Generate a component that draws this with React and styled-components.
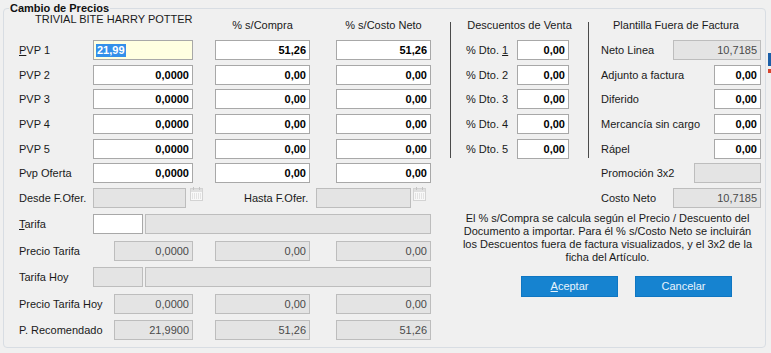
import styled, { createGlobalStyle } from 'styled-components';

const GlobalStyle = createGlobalStyle`
  html, body {
    margin: 0;
    padding: 0;
    background: #f0f0f0;
  }
  body {
    font-family: "Liberation Sans", Arial, sans-serif;
    font-size: 11px;
    color: #1a1a1a;
    overflow: hidden;
  }
`;

const tones = {
  white: { bg: '#ffffff', border: '#a8a8a8', color: '#000', weight: 'bold' },
  gray: { bg: '#e4e4e4', border: '#bdbdbd', color: '#4a4a4a', weight: 'normal' },
  yellow: { bg: '#ffffe1', border: '#a8a8a8', color: '#000', weight: 'bold' },
};

const pvpRows = [
  { label: 'PVP 2', pvp: '0,0000', compra: '0,00', neto: '0,00' },
  { label: 'PVP 3', pvp: '0,0000', compra: '0,00', neto: '0,00' },
  { label: 'PVP 4', pvp: '0,0000', compra: '0,00', neto: '0,00' },
  { label: 'PVP 5', pvp: '0,0000', compra: '0,00', neto: '0,00' },
  { label: 'Pvp Oferta', pvp: '0,0000', compra: '0,00', neto: '0,00' },
];

const plantilla = [
  { label: 'Adjunto a factura', value: '0,00' },
  { label: 'Diferido', value: '0,00' },
  { label: 'Mercancía sin cargo', value: '0,00' },
  { label: 'Rápel', value: '0,00' },
];

function CalendarIcon({ ml }) {
  return (
    <CalIcon $ml={ml} width="13" height="14" viewBox="0 0 13 14">
      <rect x="0.5" y="1.5" width="12" height="12" fill="#f8f8f8" stroke="#d3d3d3" />
      <rect x="1" y="2" width="11" height="3" fill="#e0e0e0" />
      <line x1="3.5" y1="0" x2="3.5" y2="3" stroke="#c4c4c4" />
      <line x1="9.5" y1="0" x2="9.5" y2="3" stroke="#c4c4c4" />
      {[6.5, 8.5, 10.5].map((y) =>
        [2.5, 4.5, 6.5, 8.5, 10.5].map((x) => (
          <rect key={`${x}-${y}`} x={x - 0.5} y={y} width="1" height="1" fill="#cdcdcd" />
        ))
      )}
    </CalIcon>
  );
}

export default function App() {
  return (
    <>
      <GlobalStyle />
      <GroupBox>
        <Legend>Cambio de Precios</Legend>

        <LeftPanel>
          <Row $h={31}>
            <Title>TRIVIAL BITE HARRY POTTER</Title>
            <ColHead>% s/Compra</ColHead>
            <ColHead>% s/Costo Neto</ColHead>
          </Row>

          <Row $h={24.67}>
            <Label>
              <u>P</u>VP 1
            </Label>
            <Field $tone="yellow" $w={100}>
              <Selected>21,99</Selected>
            </Field>
            <Field $tone="white" $w={95}>51,26</Field>
            <Field $tone="white" $w={95}>51,26</Field>
          </Row>
          {pvpRows.map((r) => (
            <Row key={r.label} $h={24.67}>
              <Label>{r.label}</Label>
              <Field $tone="white" $w={100}>{r.pvp}</Field>
              <Field $tone="white" $w={95}>{r.compra}</Field>
              <Field $tone="white" $w={95}>{r.neto}</Field>
            </Row>
          ))}

          <Row $h={26.4}>
            <Label>Desde F.Ofer.</Label>
            <Span3>
              <Field $tone="gray" $w={93} />
              <CalendarIcon ml={2} />
              <HastaLabel>Hasta F.Ofer.</HastaLabel>
              <Field $tone="gray" $w={95} />
              <CalendarIcon ml={0} />
            </Span3>
          </Row>
          <Row $h={26.4}>
            <Label>
              <u>T</u>arifa
            </Label>
            <Span3>
              <Field $tone="white" $w={50} />
              <Field $tone="gray" $grow />
            </Span3>
          </Row>
          <Row $h={26.4}>
            <Label>Precio Tarifa</Label>
            <Field $tone="gray" $w={79}>0,0000</Field>
            <Field $tone="gray" $w={95}>0,00</Field>
            <Field $tone="gray" $w={95}>0,00</Field>
          </Row>
          <Row $h={26.4}>
            <Label>Tarifa Hoy</Label>
            <Span3>
              <Field $tone="gray" $w={50} />
              <Field $tone="gray" $grow />
            </Span3>
          </Row>
          <Row $h={26.4}>
            <Label>Precio Tarifa Hoy</Label>
            <Field $tone="gray" $w={79}>0,0000</Field>
            <Field $tone="gray" $w={95}>0,00</Field>
            <Field $tone="gray" $w={95}>0,00</Field>
          </Row>
          <Row $h={26.4}>
            <Label>P. Recomendado</Label>
            <Field $tone="gray" $w={79}>21,9900</Field>
            <Field $tone="gray" $w={95}>51,26</Field>
            <Field $tone="gray" $w={95}>51,26</Field>
          </Row>
        </LeftPanel>

        <RightArea>
          <TopSection>
            <Separator />
            <DescCol>
              <ColTitle $align="center">Descuentos de Venta</ColTitle>
              {[1, 2, 3, 4, 5].map((n) => (
                <DescRow key={n}>
                  <DescLabel>
                    % Dto. {n === 1 ? <u>1</u> : n}
                  </DescLabel>
                  <Field $tone="white" $w={52}>0,00</Field>
                </DescRow>
              ))}
            </DescCol>
            <Separator />
            <PlantCol>
              <ColTitle $align="left">Plantilla Fuera de Factura</ColTitle>
              <PlantRow>
                <Label>Neto Linea</Label>
                <Field $tone="gray" $w={88}>10,7185</Field>
              </PlantRow>
              {plantilla.map((p) => (
                <PlantRow key={p.label}>
                  <Label>{p.label}</Label>
                  <Field $tone="white" $w={47}>{p.value}</Field>
                </PlantRow>
              ))}
              <PlantRow>
                <Label>Promoción 3x2</Label>
                <Field $tone="gray" $w={67} />
              </PlantRow>
              <PlantRow>
                <Label>Costo Neto</Label>
                <Field $tone="gray" $w={88}>10,7185</Field>
              </PlantRow>
            </PlantCol>
          </TopSection>

          <Note>
            El % s/Compra se calcula según el Precio / Descuento del
            <br />
            Documento a importar. Para él % s/Costo Neto se incluirán
            <br />
            los Descuentos fuera de factura visualizados, y el 3x2 de la
            <br />
            ficha del Artículo.
          </Note>

          <ButtonRow>
            <Button>
              <u>A</u>ceptar
            </Button>
            <Button>Cancelar</Button>
          </ButtonRow>
        </RightArea>
      </GroupBox>
      <BehindPeek>
        <span />
        <i />
      </BehindPeek>
    </>
  );
}

const GroupBox = styled.div`
  position: relative;
  box-sizing: border-box;
  display: flex;
  width: 763px;
  height: 340px;
  margin: 8px 0 0 3px;
  padding-left: 15px;
  border: 1px solid #d8dde3;
  border-radius: 4px;
`;

const Legend = styled.div`
  position: absolute;
  top: -7px;
  left: 5px;
  padding: 0 1px;
  background: #f0f0f0;
  font-weight: bold;
  line-height: 13px;
  color: #111;
`;

const LeftPanel = styled.div`
  display: flex;
  flex-direction: column;
  width: 412px;
  margin-right: 19px;
`;

const Row = styled.div`
  display: grid;
  grid-template-columns: 74px 100px 117px 121px;
  align-items: start;
  height: ${(p) => p.$h}px;
`;

const Title = styled.div`
  grid-column: span 2;
  padding: 3.5px 0 0 16px;
  line-height: 13px;
  white-space: nowrap;
`;

const ColHead = styled.div`
  justify-self: end;
  width: 95px;
  padding-top: 9.5px;
  line-height: 13px;
  text-align: center;
  white-space: nowrap;
`;

const Label = styled.span`
  line-height: 20px;
  white-space: nowrap;
`;

const Field = styled.div`
  box-sizing: border-box;
  justify-self: end;
  width: ${(p) => (p.$grow ? 'auto' : `${p.$w}px`)};
  flex: ${(p) => (p.$grow ? '1' : 'none')};
  height: 20px;
  padding: 0 3px;
  border: 1px solid ${(p) => tones[p.$tone].border};
  background: ${(p) => tones[p.$tone].bg};
  color: ${(p) => tones[p.$tone].color};
  font-weight: ${(p) => tones[p.$tone].weight};
  line-height: 18px;
  text-align: ${(p) => (p.$tone === 'yellow' ? 'left' : 'right')};
  white-space: nowrap;
  overflow: hidden;
`;

const Selected = styled.span`
  display: inline-block;
  margin-left: -1px;
  padding: 0 1px;
  line-height: 13px;
  background: #3390ea;
  color: #fff;
`;

const Span3 = styled.div`
  grid-column: 2 / span 3;
  display: flex;
  align-items: flex-start;
  gap: 2px;
`;

const CalIcon = styled.svg`
  flex: none;
  margin: -1px 0 0 ${(p) => p.$ml}px;
`;

const HastaLabel = styled.span`
  width: 70px;
  margin-left: 39px;
  line-height: 20px;
  white-space: nowrap;
`;

const RightArea = styled.div`
  display: flex;
  flex-direction: column;
  flex: 1;
`;

const TopSection = styled.div`
  display: flex;
  align-items: flex-start;
`;

const Separator = styled.div`
  flex: none;
  width: 1px;
  height: 136px;
  margin-top: 13px;
  background: #4a4a4a;
`;

const DescCol = styled.div`
  width: 137px;
`;

const ColTitle = styled.div`
  box-sizing: border-box;
  height: 31px;
  padding: 9.5px 0 0 ${(p) => (p.$align === 'left' ? '12px' : '0')};
  line-height: 13px;
  text-align: ${(p) => p.$align};
  white-space: nowrap;
`;

const DescRow = styled.div`
  display: flex;
  align-items: flex-start;
  height: 24.67px;
  padding-left: 15px;
`;

const DescLabel = styled.span`
  width: 51px;
  line-height: 20px;
  white-space: nowrap;
`;

const PlantCol = styled.div`
  box-sizing: border-box;
  width: 176px;
  padding: 0 4px 0 12px;
`;

const PlantRow = styled.div`
  display: flex;
  align-items: flex-start;
  justify-content: space-between;
  height: 24.67px;
`;

const Note = styled.p`
  margin: -1px 0 0;
  line-height: 13px;
  text-align: center;
  white-space: nowrap;
  color: #1a1a1a;
`;

const ButtonRow = styled.div`
  display: flex;
  gap: 17px;
  margin-top: 12.5px;
  padding-left: 71px;
`;

const Button = styled.button`
  box-sizing: border-box;
  width: 97px;
  height: 21px;
  padding: 0;
  border: 1px solid #0f76c2;
  background: #1683d0;
  color: #e8f3fc;
  font-family: inherit;
  font-size: 11px;
  line-height: 19px;
`;

const BehindPeek = styled.div`
  position: fixed;
  top: 53px;
  right: 0;
  display: flex;
  flex-direction: column;
  gap: 3px;
  width: 3px;

  span {
    height: 13px;
    background: #1b5fa8;
  }
  i {
    height: 4px;
    background: #d8452e;
  }
`;
